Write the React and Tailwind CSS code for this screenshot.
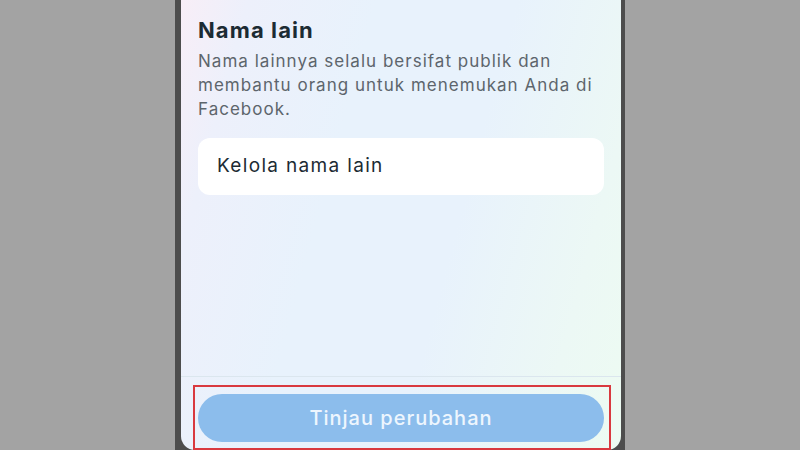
export default function App() {
  return (
    <div className="w-[800px] h-[450px] bg-[#a3a3a3] flex justify-center overflow-hidden">
      <div className="w-[450px] h-full bg-[#4d4d4d] pl-[6px] pr-[4px]">
        <div
          className="h-full flex flex-col rounded-b-[14px] bg-[linear-gradient(105deg,#f8eef7_0%,#edf0fb_12%,#e8f2fc_35%,#e8f2fc_60%,#ecf8f5_85%,#edfbf2_100%)]"
          style={{ fontFamily: "Inter, 'Noto Sans', sans-serif" }}
        >
          <div className="px-[17px] pt-[16px]">
            <h1 className="text-[22px] leading-[28px] font-bold tracking-[0.05em] text-[#1c2b33]">Nama lain</h1>
            <p className="mt-[5px] text-[17px] leading-[24px] tracking-[0.06em] text-[#5d656c] whitespace-nowrap">
              Nama lainnya selalu bersifat publik dan
              <br />
              membantu orang untuk menemukan Anda di
              <br />
              Facebook.
            </p>
            <div className="mt-[17px] h-[57px] bg-white rounded-[12px] flex items-center pl-[19px]">
              <span className="text-[19px] tracking-[0.07em] text-[#1c2b33]">Kelola nama lain</span>
            </div>
          </div>
          <div className="flex-1" />
          <div className="h-px bg-[#dbe6ee]" />
          <div className="pt-[8px] pl-[12px]">
            <div className="w-[418px] h-[65px] border-2 border-[#d9393f] pt-[7px] pl-[3px]">
              <button className="w-[406px] h-[48px] rounded-full bg-[#8cbdec] text-[#eef6fe] text-[20px] font-medium tracking-[0.05em]">
                Tinjau perubahan
              </button>
            </div>
          </div>
        </div>
      </div>
    </div>
  );
}
